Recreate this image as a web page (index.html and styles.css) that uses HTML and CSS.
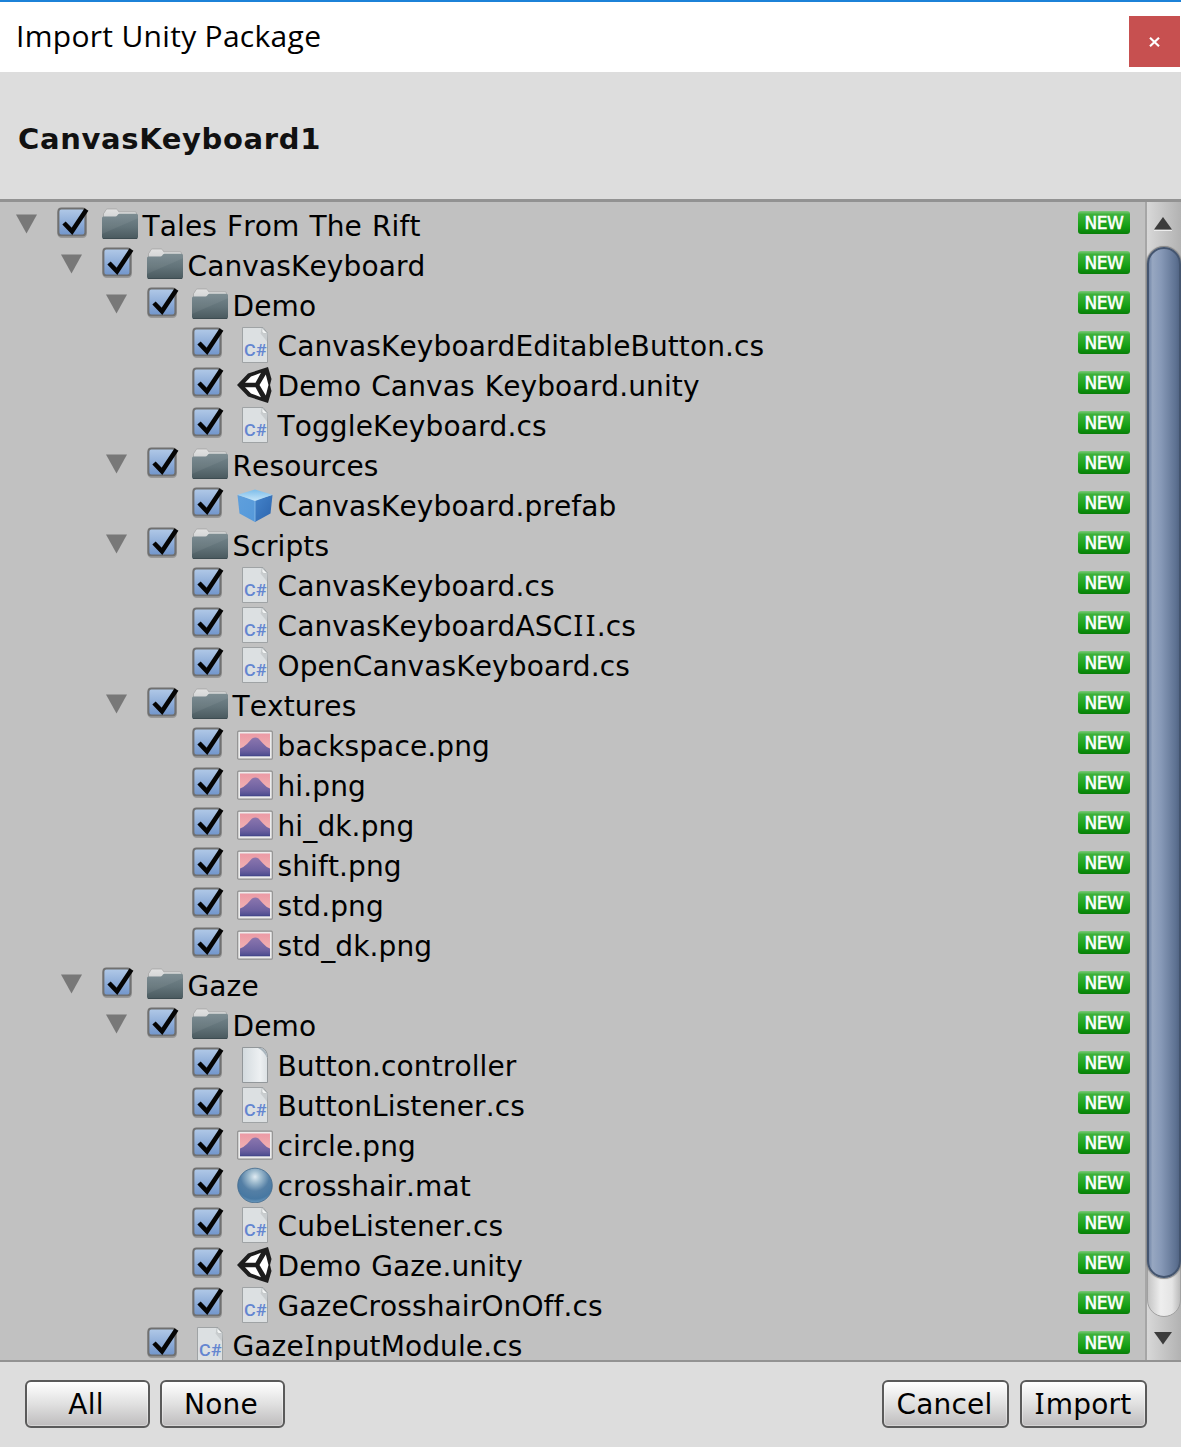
FILE: index.html
```html
<!DOCTYPE html>
<html lang="en">
<head>
	<meta charset="UTF-8">
	<title>Import Unity Package</title>
	<link rel="stylesheet" href="styles.css">
</head>
<body>
	<svg class="defs" width="0" height="0">
		<defs>
			<linearGradient id="gBox" x1="0" y1="0" x2="0" y2="1"><stop offset="0" stop-color="#b2cae8"/><stop offset="1" stop-color="#7195cb"/></linearGradient>
			<linearGradient id="gFolder" x1="0" y1="0" x2="0" y2="1"><stop offset="0" stop-color="#75868c"/><stop offset=".5" stop-color="#63747a"/><stop offset="1" stop-color="#49595e"/></linearGradient>
			<linearGradient id="gTab" x1="0" y1="0" x2="0" y2="1"><stop offset="0" stop-color="#e2e2e2"/><stop offset="1" stop-color="#b0b3b4"/></linearGradient>
			<linearGradient id="gPage" x1="0" y1="0" x2="1" y2="0"><stop offset="0" stop-color="#d3dade"/><stop offset=".7" stop-color="#edf0f2"/><stop offset="1" stop-color="#dbe0e3"/></linearGradient>
			<linearGradient id="gSky" x1="0" y1="0" x2="0" y2="1"><stop offset="0" stop-color="#eb9aa5"/><stop offset="1" stop-color="#f3bcb9"/></linearGradient>
			<linearGradient id="gHill" x1="0" y1="0" x2="0" y2="1"><stop offset="0" stop-color="#8b76ae"/><stop offset=".7" stop-color="#6c60a0"/><stop offset="1" stop-color="#4b4b8e"/></linearGradient>
			<linearGradient id="gLeft" x1="0" y1="0" x2="1" y2="1"><stop offset="0" stop-color="#5f9fdc"/><stop offset="1" stop-color="#5599da"/></linearGradient>
			<linearGradient id="gRight" x1="0" y1="0" x2="1" y2="1"><stop offset="0" stop-color="#4484cb"/><stop offset="1" stop-color="#2c64ad"/></linearGradient>
			<linearGradient id="gTop" x1="0" y1="0" x2="0" y2="1"><stop offset="0" stop-color="#7dbdea"/><stop offset="1" stop-color="#c6e5f8"/></linearGradient>
			<radialGradient id="gBall" cx=".5" cy=".25" r=".75"><stop offset="0" stop-color="#e0ebf2"/><stop offset=".22" stop-color="#a3bfd1"/><stop offset=".55" stop-color="#547fa5"/><stop offset=".85" stop-color="#4778a2"/><stop offset="1" stop-color="#6b9abf"/></radialGradient>
		</defs>
		<symbol id="arrow" viewBox="0 0 22 20"><path d="M0 0h22L11 20z" fill="#787878"/></symbol>
		<symbol id="check" viewBox="0 0 32 32">
			<rect x="1.2" y="2.2" width="28" height="28" rx="3.5" fill="none" stroke="#999" stroke-width="1.5"/>
			<rect x="1.4" y="1.4" width="27" height="27" rx="3" fill="url(#gBox)" stroke="#707070" stroke-width="2"/>
			<path d="M7 16l8 8.300L29.500 2.500" fill="none" stroke="#050505" stroke-width="4.600"/>
		</symbol>
		<symbol id="folder" viewBox="0 0 36 36">
			<path d="M1.500 31V7q0-.8.700-1.200L4 2.800q.5-.8 1.500-.8h8.500q1 0 1.500.8l1.300 2H33q1.500 0 1.500 1.500V31z" fill="url(#gTab)" stroke="#999" stroke-width=".6"/>
			<path d="M0 11q0-1.500 1.500-1.500h12q1 0 1.500-.7l1-1.300q.5-.7 1.500-.7h17q1.500 0 1.500 1.500V30q0 2-2 2H2q-2 0-2-2z" fill="url(#gFolder)"/>
			<path d="M0 11q0-1.500 1.500-1.500h12q1 0 1.500-.7l1-1.300q.5-.7 1.500-.7h17q1.500 0 1.500 1.500v3L0 27z" fill="#fff" opacity=".06"/>
			<path d="M1 31.500h34" stroke="#3d4c51" stroke-width="1"/>
		</symbol>
		<symbol id="cs" viewBox="0 0 36 36">
			<path d="M5.500.5h20.500l4.500 5.500v29.500h-25z" fill="#dce0e2" stroke="#9fa3a5" stroke-width="1"/>
			<path d="M25 1v3.500q0 2 2 2h3.500l-.5 8-6.500-8z" fill="#c9cdcf"/>
			<path d="M25 1v3.500q0 2 2 2h3.500z" fill="#f2f4f4" stroke="#b9bdbf" stroke-width=".7"/>
		</symbol>
		<symbol id="page" viewBox="0 0 36 36">
			<path d="M5.500.5h19q6 2 6 10v25h-25z" fill="url(#gPage)" stroke="#92979a" stroke-width="1"/>
			<path d="M21 1h3.500q5.500 2 5.500 10-3-7-9-10z" fill="#a9b5bd"/>
		</symbol>
		<symbol id="unity" viewBox="0 0 36 36">
			<path d="M0 18L11 6.500 31 0l3.500 12-1.500 6 1.500 6L31 36 11 29.500z" fill="#1d1d1d"/>
			<path d="M8 15.700L14 9.500l10-3.700-5.500 9.900zM8 20.300l6 6.200 10 3.700-5.500-9.900zM22.500 18l6.300-10.500L31.500 18l-2.700 10.500z" fill="#fff"/>
		</symbol>
		<symbol id="prefab" viewBox="0 0 36 36">
			<path d="M.5 8L18 13v22L2.500 26.500z" fill="url(#gLeft)"/>
			<path d="M35.500 8L18 13v22l15.500-8.500z" fill="url(#gRight)"/>
			<path d="M.5 7.800L18 2.500l17.500 5.300L18 14z" fill="url(#gTop)"/>
			<path d="M18 14v20.500" stroke="#8dc0ec" stroke-width=".8"/>
		</symbol>
		<symbol id="image" viewBox="0 0 36 36">
			<rect x=".7" y="4.200" width="34.600" height="28" rx="1" fill="#ececec" stroke="#8f8f8f" stroke-width="1.200"/>
			<rect x="3" y="6.500" width="30" height="22.500" fill="url(#gSky)"/>
			<path d="M3 21.500q4-1.500 7-4.500l5-5.500q3.500-2 6.500 0l4.500 5q3 3.500 7 5V29H3z" fill="url(#gHill)"/>
			<path d="M3 28.800h30" stroke="#45478a" stroke-width="1"/>
		</symbol>
		<symbol id="material" viewBox="0 0 36 36"><circle cx="18" cy="18.500" r="17.300" fill="url(#gBall)" stroke="#43698b" stroke-width=".8"/></symbol>
	</svg>

	<section class="window">
		<header class="titlebar">
			<span class="title">Import Unity Package</span>
			<a class="close"><svg width="11" height="10" viewBox="0 0 11 10"><path d="M1 .8l9 8.400M10 .8L1 9.200" stroke="#fff" stroke-width="2.200"/></svg></a>
		</header>
		<h1 class="package">CanvasKeyboard1</h1>
		<section class="content">
			<ul class="tree"></ul>
			<div class="scrollbar">
				<div class="up"><svg width="18" height="14" viewBox="0 0 18 14"><path d="M0 13.500h18" stroke="#eee"/><path d="M9 0l9 12.500H0z" fill="#3c3c3c"/></svg></div>
				<div class="track"><div class="thumb"></div></div>
				<div class="down"><svg width="18" height="14" viewBox="0 0 18 14"><path d="M0 0h18L9 12.500z" fill="#3c3c3c"/></svg></div>
			</div>
		</section>
		<footer class="footer">
			<button class="btn">All</button>
			<button class="btn">None</button>
			<button class="btn cancel">Cancel</button>
			<button class="btn import"><span class="cap">I</span>mport</button>
		</footer>
	</section>

	<script>
		//level, icon, name
		var items = [
			[0, 'folder', 'Tales From The Rift'],
			[1, 'folder', 'CanvasKeyboard'],
			[2, 'folder', 'Demo'],
			[3, 'cs', 'CanvasKeyboardEditableButton.cs'],
			[3, 'unity', 'Demo Canvas Keyboard.unity'],
			[3, 'cs', 'ToggleKeyboard.cs'],
			[2, 'folder', 'Resources'],
			[3, 'prefab', 'CanvasKeyboard.prefab'],
			[2, 'folder', 'Scripts'],
			[3, 'cs', 'CanvasKeyboard.cs'],
			[3, 'cs', 'CanvasKeyboardASCII.cs'],
			[3, 'cs', 'OpenCanvasKeyboard.cs'],
			[2, 'folder', 'Textures'],
			[3, 'image', 'backspace.png'],
			[3, 'image', 'hi.png'],
			[3, 'image', 'hi_dk.png'],
			[3, 'image', 'shift.png'],
			[3, 'image', 'std.png'],
			[3, 'image', 'std_dk.png'],
			[1, 'folder', 'Gaze'],
			[2, 'folder', 'Demo'],
			[3, 'page', 'Button.controller'],
			[3, 'cs', 'ButtonListener.cs'],
			[3, 'image', 'circle.png'],
			[3, 'material', 'crosshair.mat'],
			[3, 'cs', 'CubeListener.cs'],
			[3, 'unity', 'Demo Gaze.unity'],
			[3, 'cs', 'GazeCrosshairOnOff.cs'],
			[2, 'cs', 'GazeInputModule.cs']
		];

		var html = '';
		items.forEach(function(v) {
			var name = v[2].replace(/I/g, '<span class="cap">I</span>');
			var label = v[1] == 'cs' ? '<text class="cs-text" x="7" y="28.500" textLength="22.500" lengthAdjust="spacingAndGlyphs">C#</text>' : '';
			html += '<li class="level' + v[0] + '">' +
				'<svg class="arrow">' + (v[1] == 'folder' ? '<use href="#arrow"/>' : '') + '</svg>' +
				'<svg class="check"><use href="#check"/></svg>' +
				'<svg class="icon"><use href="#' + v[1] + '"/>' + label + '</svg>' +
				'<span class="name">' + name + '</span>' +
				'<em class="new">NEW</em>' +
			'</li>';
		});
		document.querySelector('.tree').innerHTML = html;
	</script>
</body>
</html>
```
FILE: styles.css
```css
*{
	box-sizing:border-box;
}
body{
	margin:0;
	font-family:"DejaVu Sans",sans-serif;
	font-size:28px;
	color:#000;
}
ul{
	margin:0;
	padding:0;
	list-style:none;
}
svg{
	display:block;
}
.defs{
	position:absolute;
}
.window{
	display:flex;
	flex-direction:column;
	height:1447px;
	background:#ddd;
	overflow:hidden;
}
.titlebar{
	display:flex;
	justify-content:space-between;
	height:72px;
	padding:14px 1px 0 16px;
	border-top:2px solid #1c82d8;
	background:#fff;
}
.title{
	font-family:"Open Sans",sans-serif;
	font-size:30px;
	line-height:40px;
	letter-spacing:.3px;
	font-weight:400;
	white-space:nowrap;
}
.close{
	display:flex;
	align-items:center;
	justify-content:center;
	width:51px;
	height:51px;
	background:#c75050;
}
.package{
	height:127px;
	margin:0;
	padding-left:18px;
	font-size:29px;
	line-height:134px;
	letter-spacing:.65px;
	color:#111;
}
.content{
	display:flex;
	height:1163px;
	border-top:3px solid #929292;
	border-bottom:2px solid #929292;
	background:#c1c1c1;
}
.tree{
	flex:1;
	padding:2px 15px 0 16px;
	overflow:hidden;
}
.tree li{
	display:flex;
	height:40px;
}
.tree .level1{
	padding-left:45px;
}
.tree .level2{
	padding-left:90px;
}
.tree .level3{
	padding-left:135px;
}
.arrow{
	width:21px;
	height:20px;
	margin:10px 20px 0 0;
}
.check{
	width:32px;
	height:32px;
	margin:3px 13px 0 0;
}
.icon{
	width:36px;
	height:36px;
	margin-top:3px;
	overflow:visible;
}
.cs-text{
	font-family:Roboto,sans-serif;
	font-size:17px;
	font-weight:500;
	fill:#6486d0;
}
.name{
	flex:1;
	padding-left:4.5px;
	line-height:45px;
	letter-spacing:.12px;
	word-spacing:1px;
	font-kerning:none;
	font-variant-ligatures:none;
	white-space:nowrap;
}
.cap{
	padding:0 1.2px;
	font-family:"Noto Sans",sans-serif;
	font-size:28.5px;
	line-height:1;
}
.new{
	width:52px;
	height:23px;
	margin-top:7px;
	border-radius:3px;
	background:linear-gradient(#7cc87a,#3db13a 15%,#16a016 65%,#087f08);
	font-size:17px;
	font-style:normal;
	line-height:24px;
	letter-spacing:-.4px;
	text-align:center;
	color:#fff;
	-webkit-text-stroke:.5px #fff;
}
.scrollbar{
	display:flex;
	flex-direction:column;
	width:36px;
	padding:2px 0;
	border-left:2px solid #a6a6a6;
	background:linear-gradient(90deg,#d8d8d8,#b2b2b2);
}
.up,.down{
	display:flex;
	justify-content:center;
	padding-right:2px;
	height:43px;
}
.up{
	padding-top:13px;
}
.down{
	padding-top:17px;
}
.track{
	flex:1;
	margin:-1px 0 -2px;
	border:1px solid #a0a0a0;
	border-radius:17px;
	background:linear-gradient(90deg,#c5c5c5,#eee 40%,#e4e4e4 75%,#bbb);
	z-index:1;
}
.thumb{
	height:1031px;
	margin:0 -1px;
	border:2px solid #44556f;
	border-radius:17px;
	background:linear-gradient(90deg,#7387a8,#97a7c1 12%,#8799b7 40%,#5d7191 90%,#536685);
	box-shadow:0 0 1px 1px #888;
}
.footer{
	display:flex;
	gap:10px;
	padding:18px 34px 0 25px;
}
.btn{
	width:125px;
	height:48px;
	padding:1px 3px 0 0;
	border:2px solid #5a5a5a;
	border-radius:6px;
	background:linear-gradient(#fff,#e0e0e0 50%,#bebcbd);
	box-shadow:inset 0 0 0 1px rgba(255,255,255,.35);
	font:28px/40px "DejaVu Sans",sans-serif;
	letter-spacing:.2px;
	color:#000;
}
.cancel{
	width:127px;
	margin-left:auto;
	margin-right:1px;
	padding-right:2px;
}
.import{
	width:127px;
	padding-right:2px;
}
```
